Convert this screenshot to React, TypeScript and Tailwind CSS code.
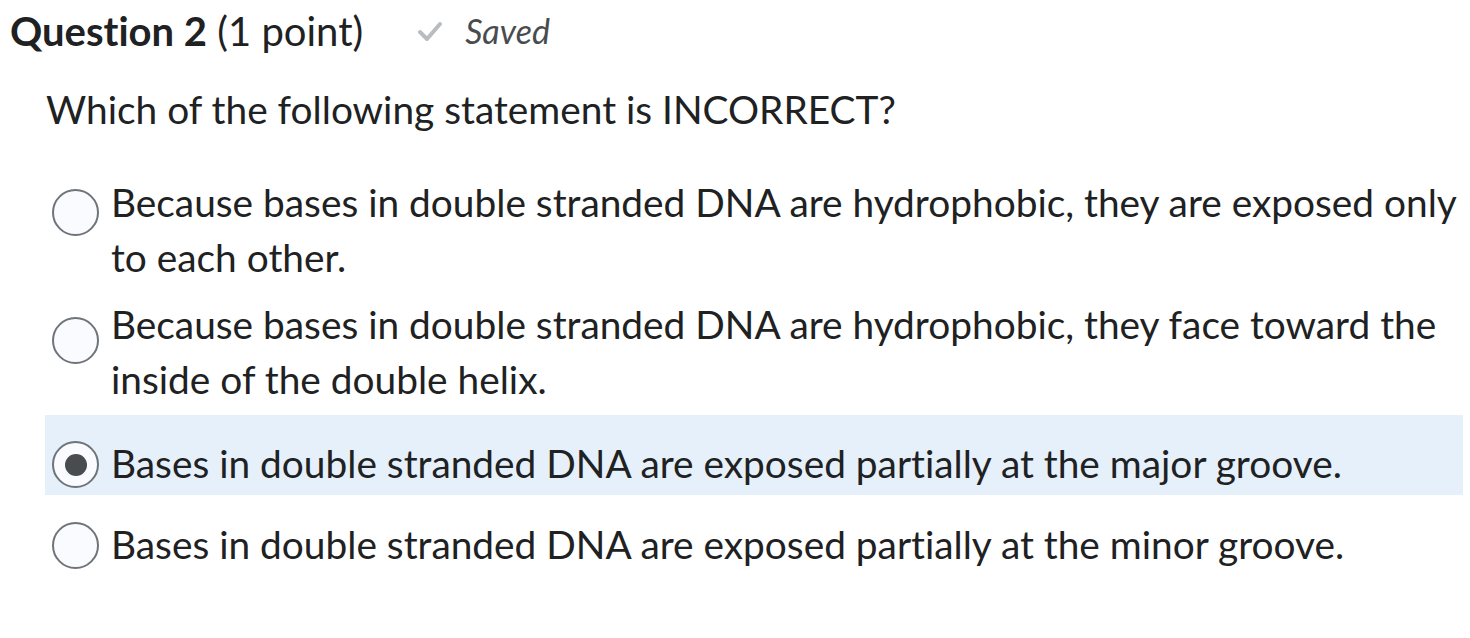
import { useState } from 'react'

const options = [
  {
    text: 'Because bases in double stranded DNA are hydrophobic, they are exposed only to each other.',
    row: 'pt-[6px] pb-[6px]',
    dot: 'mt-[14px]',
  },
  {
    text: 'Because bases in double stranded DNA are hydrophobic, they face toward the inside of the double helix.',
    row: 'pt-[6px] pb-[8px]',
    dot: 'mt-[20px]',
  },
  {
    text: 'Bases in double stranded DNA are exposed partially at the major groove.',
    row: 'pt-[21px] pb-[4px]',
    dot: 'mt-[5px]',
  },
  {
    text: 'Bases in double stranded DNA are exposed partially at the minor groove.',
    row: 'pt-[22px] pb-[4px]',
    dot: 'mt-[5px]',
  },
]

function Radio({ checked }: { checked: boolean }) {
  return (
    <span className="flex h-[47px] w-[47px] shrink-0 items-center justify-center rounded-full border-2 border-[#6e7478] bg-[#f9fbff]">
      {checked && <span className="h-[22px] w-[22px] rounded-full bg-[#494c4e]" />}
    </span>
  )
}

export default function App() {
  const [selected, setSelected] = useState(2)

  return (
    <div
      className="min-h-screen bg-white text-[#202122] [font-variant-ligatures:none]"
      style={{ fontFamily: 'Lato, "Open Sans", sans-serif' }}
    >
      <div className="flex items-center pl-[10px] pt-[5px]">
        <h2 className="text-[40px] leading-[50px]">
          <span className="font-bold">Question 2</span> (1 point)
        </h2>
        <svg className="ml-[54px] h-[24px] w-[26px]" viewBox="0 0 26 24" fill="none">
          <path d="M3 13 L10 20 L23 5" stroke="#b9bdc0" strokeWidth="4" strokeLinecap="round" strokeLinejoin="round" />
        </svg>
        <span className="ml-[22px] text-[34px] italic text-[#494c4e]">Saved</span>
      </div>

      <p className="ml-[46px] mt-[26px] text-[38.85px] leading-[55px]">Which of the following statement is INCORRECT?</p>

      <div className="ml-[45px] mr-[7px] mt-[32px]">
        {options.map((o, i) => (
          <label
            key={i}
            onClick={() => setSelected(i)}
            className={
              'flex cursor-pointer items-start gap-[12px] pl-[7px] pr-[2px] ' +
              o.row +
              (selected === i ? ' bg-[#e6f0fb]' : '')
            }
          >
            <span className={'shrink-0 ' + o.dot}>
              <Radio checked={selected === i} />
            </span>
            <span className="text-[38.85px] leading-[55px]">{o.text}</span>
          </label>
        ))}
      </div>
    </div>
  )
}
